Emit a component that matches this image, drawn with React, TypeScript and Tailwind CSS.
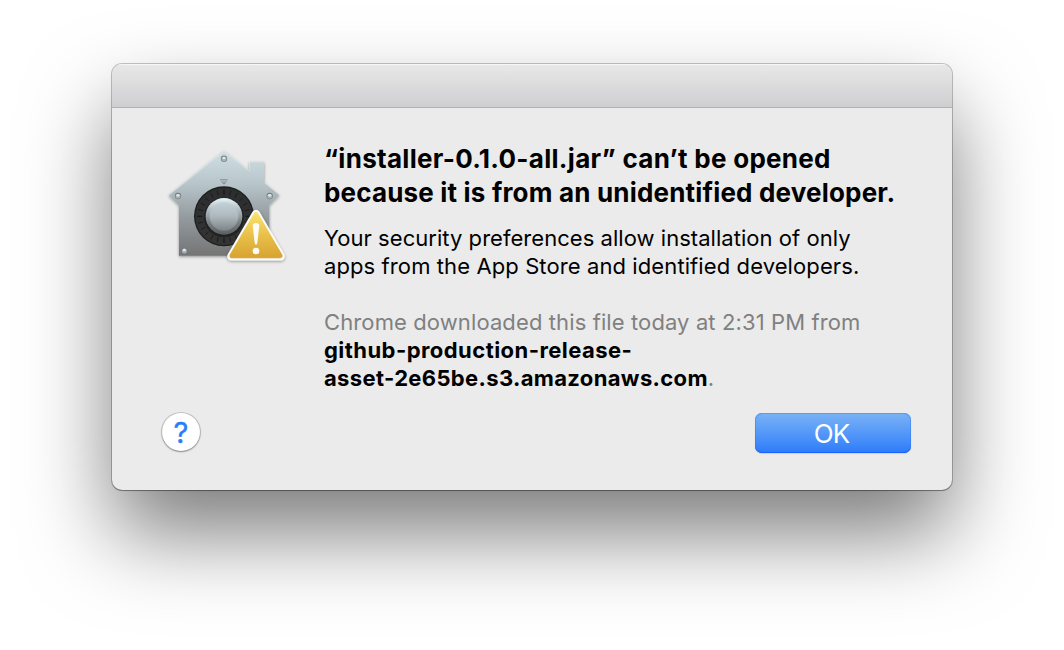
function GatekeeperIcon() {
  const ticks = Array.from({ length: 24 }, (_, i) => i * 15);
  const rivets = [
    [207, 56],
    [69, 168],
    [344, 168],
    [88, 332],
  ];
  return (
    <svg width="145" height="135" viewBox="0 0 435 405" className="shrink-0" aria-hidden="true">
      <defs>
        <linearGradient id="house" x1="0" y1="0" x2="0" y2="1">
          <stop offset="0" stopColor="#cfdfe4" />
          <stop offset="0.3" stopColor="#b9c7cc" />
          <stop offset="0.65" stopColor="#92999c" />
          <stop offset="1" stopColor="#747474" />
        </linearGradient>
        <linearGradient id="rim" x1="0" y1="0" x2="0" y2="1">
          <stop offset="0" stopColor="#e6f2f6" />
          <stop offset="0.3" stopColor="#b4c0c5" />
          <stop offset="0.65" stopColor="#7c8386" />
          <stop offset="1" stopColor="#5a5e60" />
        </linearGradient>
        <linearGradient id="knob" x1="0" y1="0" x2="0" y2="1">
          <stop offset="0" stopColor="#c3d3d9" />
          <stop offset="0.5" stopColor="#adb8bd" />
          <stop offset="1" stopColor="#7e8487" />
        </linearGradient>
        <linearGradient id="dial" x1="0" y1="0" x2="0" y2="1">
          <stop offset="0" stopColor="#2b2d2e" />
          <stop offset="1" stopColor="#343434" />
        </linearGradient>
        <linearGradient id="warn" x1="0" y1="0" x2="0" y2="1">
          <stop offset="0" stopColor="#f8e06a" />
          <stop offset="0.5" stopColor="#e8c04a" />
          <stop offset="1" stopColor="#d9a634" />
        </linearGradient>
        <filter id="soft" x="-20%" y="-20%" width="140%" height="140%">
          <feDropShadow dx="0" dy="3" stdDeviation="4" floodColor="#000" floodOpacity="0.4" />
        </filter>
      </defs>
      <path
        d="M207 33 L283 93 V66 H327 V128 L373 166 L343 196 V347 H72 V196 L41 166 Z"
        fill="url(#house)"
        filter="url(#soft)"
      />
      <path d="M41 166 L207 34 L283 93 V66 H327" fill="none" stroke="#e3edf0" strokeWidth="2" opacity="0.7" />
      {rivets.map(([x, y]) => (
        <g key={`${x}-${y}`}>
          <circle cx={x} cy={y} r="9.5" fill="#6f797d" />
          <circle cx={x} cy={y + 1} r="7.5" fill="#a5afb3" />
          <ellipse cx={x} cy={y - 2} rx="5" ry="4" fill="#dfe6e8" />
        </g>
      ))}
      <path
        d="M195 119 H218 M199 122 L204 131 H210 L215 122 M207 121 V131"
        fill="none"
        stroke="#6f7a7e"
        strokeWidth="2.5"
        opacity="0.8"
      />
      <circle cx="207" cy="229" r="90" fill="#1d1e1f" />
      <circle cx="207" cy="229" r="86" fill="url(#dial)" />
      {ticks.map((a) => (
        <path
          key={a}
          d="M207 149 V164"
          stroke="#141515"
          strokeWidth={a % 90 === 0 ? 4 : 2.5}
          opacity="0.85"
          transform={`rotate(${a} 207 229)`}
        />
      ))}
      <circle cx="207" cy="232" r="60" fill="#1c1d1e" opacity="0.75" />
      <circle cx="207" cy="229" r="55" fill="url(#rim)" />
      <circle cx="207" cy="229" r="43" fill="url(#knob)" />
      <path
        d="M303 222 L377 349 H229 Z"
        fill="#fafafa"
        stroke="#fafafa"
        strokeWidth="25"
        strokeLinejoin="round"
        filter="url(#soft)"
      />
      <path d="M303 224 L375 347 H231 Z" fill="url(#warn)" stroke="url(#warn)" strokeWidth="15" strokeLinejoin="round" />
      <path d="M293 257 Q293 249 303 249 Q313 249 313 257 L307 308 Q306 314 303 314 Q300 314 299 308 Z" fill="#fcfaf3" />
      <circle cx="303" cy="333" r="10" fill="#fcfaf3" />
    </svg>
  );
}

export default function App() {
  return (
    <div className="flex h-[650px] w-[1064px] flex-col overflow-hidden bg-white pt-16 pl-28 font-['Inter','Liberation_Sans',sans-serif]">
      <div className="flex h-[426px] w-[840px] shrink-0 flex-col overflow-hidden rounded-[10px] bg-[#ebebeb] shadow-[0_0_0_1px_rgba(0,0,0,0.22),0_1px_1px_rgba(0,0,0,0.25),0_44px_86px_-1px_rgba(0,0,0,0.52)]">
        <div className="h-11 shrink-0 border-b border-[#b1b1b1] bg-linear-to-b from-[#e8e8e9] to-[#cfcfd1] shadow-[inset_0_1px_0_#f6f6f6]" />
        <div className="flex pt-8 pl-[43px]">
          <GatekeeperIcon />
          <div className="flex flex-col pl-6 whitespace-nowrap text-black">
            <h1 className="pt-0.5 text-[26px] leading-[34px] font-bold">
              <span className="tracking-[0.29px]">“installer-0.1.0-all.jar” can’t be opened</span>
              <br />
              <span className="tracking-[0.18px]">because it is from an unidentified developer.</span>
            </h1>
            <p className="mt-[14px] text-[22px] leading-7">
              <span className="tracking-[0.04px]">Your security preferences allow installation of only</span>
              <br />
              <span className="tracking-[0.1px]">apps from the App Store and identified developers.</span>
            </p>
            <p className="mt-7 text-[22px] leading-7 text-[#808080]">
              <span className="tracking-[0.11px]">Chrome downloaded this file today at 2:31 PM from</span>
              <br />
              <strong className="font-bold tracking-[0.45px] text-black">github-production-release-</strong>
              <br />
              <strong className="font-bold tracking-[0.35px] text-black">asset-2e65be.s3.amazonaws.com</strong>.
            </p>
          </div>
        </div>
        <div className="mt-auto mb-[37px] flex items-center justify-between pr-[41px] pl-[50px]">
          <button className="mb-0.5 flex size-[38px] items-center justify-center rounded-full bg-white text-[29px] leading-none text-[#2a7dfa] shadow-[0_0_0_1px_rgba(0,0,0,0.16),0_1px_2px_rgba(0,0,0,0.3)] [-webkit-text-stroke:0.4px_#2a7dfa]">
            ?
          </button>
          <button className="flex h-10 w-[156px] items-center justify-center rounded-[7px] bg-linear-to-b from-[#7ab2f5] to-[#2b7bfa] pr-[3px] text-[26px] tracking-[-0.8px] text-white shadow-[inset_0_1px_0_#5b9df0,inset_0_-1px_0_#1a63f5,inset_0_0_0_1px_rgba(40,110,240,0.35),0_1px_1px_rgba(0,0,0,0.12)]">
            OK
          </button>
        </div>
      </div>
    </div>
  );
}
